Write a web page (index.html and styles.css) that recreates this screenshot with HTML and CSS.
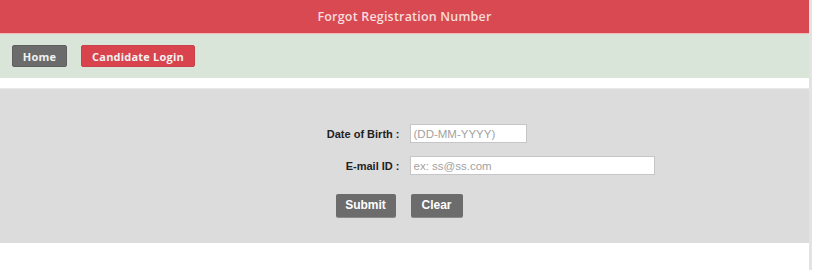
FILE: index.html
```html
<!DOCTYPE html>
<html lang="en">
<head>
<meta charset="utf-8">
<title>Forgot Registration Number</title>
<link rel="stylesheet" href="styles.css">
</head>
<body>
<div class="page">
  <div class="header">Forgot Registration Number</div>
  <div class="nav">
    <a class="nav-btn nav-home" href="#">Home</a>
    <a class="nav-btn nav-login" href="#">Candidate Login</a>
  </div>
  <div class="spacer"></div>
  <form class="form-area">
    <label class="label" for="dob">Date of Birth :</label>
    <div class="field"><input id="dob" class="input input-dob" type="text" placeholder="(DD-MM-YYYY)"></div>
    <label class="label" for="email">E-mail ID :</label>
    <div class="field"><input id="email" class="input input-email" type="text" placeholder="ex: ss@ss.com"></div>
    <div class="actions-left"><button type="button" class="btn btn-submit">Submit</button></div>
    <div class="actions-right"><button type="reset" class="btn btn-clear">Clear</button></div>
  </form>
  <div class="footer-space"></div>
</div>
</body>
</html>
```
FILE: styles.css
```css
html, body {
  margin: 0;
  padding: 0;
  background: #ffffff;
}
body {
  width: 820px;
  height: 270px;
  overflow: hidden;
  font-family: "Liberation Sans", Arial, sans-serif;
}
.page {
  width: 809px;
  height: 270px;
  border-right: 3px solid #e3e3e3;
  box-sizing: content-box;
}
.header {
  height: 33px;
  line-height: 33px;
  background: #d84952;
  border-bottom: 1px solid #f2b9b9;
  color: #f9dcdc;
  text-align: center;
  font-family: "Open Sans", sans-serif;
  font-weight: 600;
  font-size: 12.5px;
  letter-spacing: 0.2px;
}
.nav {
  height: 44px;
  box-sizing: border-box;
  padding: 11px 12px;
  background: #dae5d9;
  display: flex;
  gap: 14px;
}
.nav-btn {
  height: 22px;
  line-height: 22px;
  box-sizing: border-box;
  border-radius: 2px;
  text-decoration: none;
  color: #f1f1f1;
  font-family: "Open Sans", sans-serif;
  font-weight: 700;
  font-size: 11px;
  letter-spacing: 0.2px;
  text-align: center;
}
.nav-home {
  width: 55px;
  background: #6b6b6b;
  border: 1px solid #5f5f5f;
}
.nav-login {
  width: 114px;
  background: #d8434d;
  border: 1px solid #c9424a;
}
.spacer {
  height: 11px;
  background: #ffffff;
  border-bottom: 1px solid #e9e9e9;
  box-sizing: border-box;
}
.form-area {
  margin: 0;
  height: 154px;
  box-sizing: border-box;
  padding: 35px 0 0;
  background: #dcdcdc;
  display: grid;
  grid-template-columns: 1fr 1fr;
  grid-template-rows: 19px 19px 23px;
  column-gap: 10px;
  row-gap: 13px;
  align-items: center;
}
.label {
  justify-self: end;
  padding-right: 0;
  font-weight: 700;
  font-size: 11px;
  color: #222222;
}
.field {
  display: flex;
}
.input {
  height: 19px;
  box-sizing: border-box;
  border: 1px solid #c6c6c6;
  background: #ffffff;
  padding: 0 3px;
  margin: 0;
  font-family: "Liberation Sans", Arial, sans-serif;
  font-size: 11.5px;
  color: #333333;
  outline: none;
}
.input::placeholder {
  color: #a2a2a2;
}
.input-dob {
  width: 117px;
}
.input-email {
  width: 245px;
}
.form-area .actions-left,
.form-area .actions-right {
  display: flex;
  margin-top: 11px;
}
.actions-left {
  justify-content: flex-end;
  padding-right: 4px;
}
.actions-right {
  justify-content: flex-start;
  padding-left: 1px;
}
.btn {
  height: 23px;
  border: none;
  border-radius: 2px;
  background: #6c6c6c;
  box-shadow: 0 1px 0 #8a8a8a;
  color: #ffffff;
  font-family: "Liberation Sans", Arial, sans-serif;
  font-weight: 700;
  font-size: 12px;
  padding: 0;
}
.btn-submit {
  width: 60px;
}
.btn-clear {
  width: 52px;
}
.footer-space {
  height: 27px;
  background: #ffffff;
}
```
